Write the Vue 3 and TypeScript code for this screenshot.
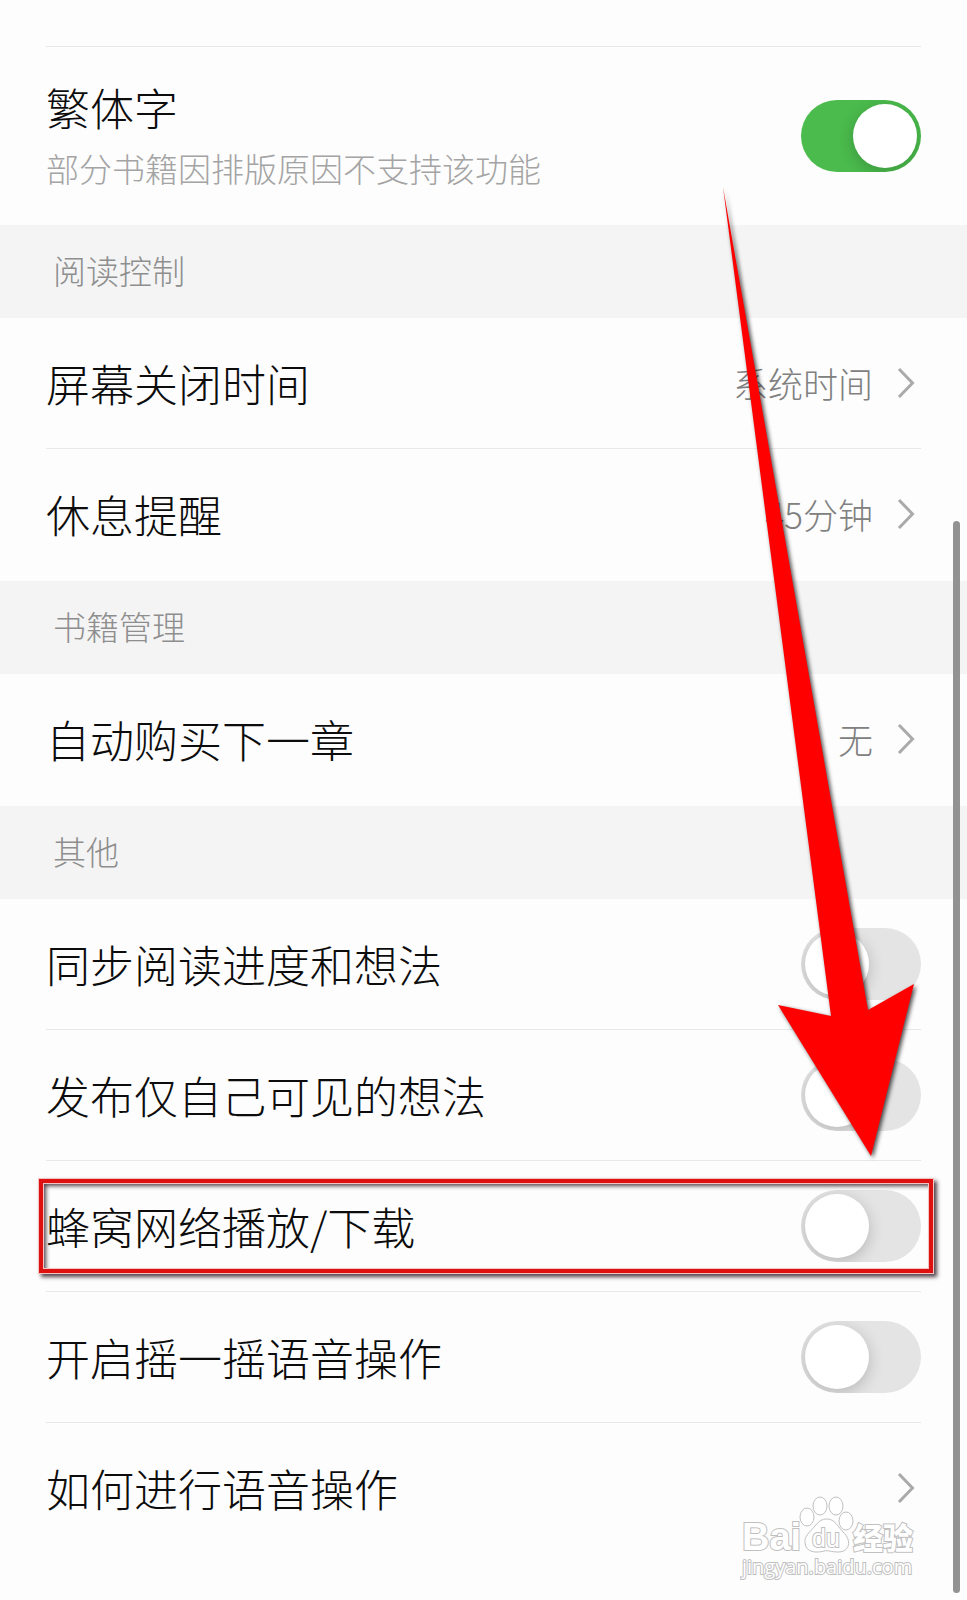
<script setup lang="ts">
import { ref } from 'vue'

interface Row {
  id: string
  label: string
  hint?: string
  kind: 'toggle' | 'link'
  value?: string
  on?: boolean
  marked?: boolean
}

interface Section {
  title: string
  rows: Row[]
}

const sections = ref<Section[]>([
  {
    title: '',
    rows: [
      {
        id: 'traditional',
        label: '繁体字',
        hint: '部分书籍因排版原因不支持该功能',
        kind: 'toggle',
        on: true,
      },
    ],
  },
  {
    title: '阅读控制',
    rows: [
      { id: 'screen', label: '屏幕关闭时间', kind: 'link', value: '系统时间' },
      { id: 'rest', label: '休息提醒', kind: 'link', value: '45分钟' },
    ],
  },
  {
    title: '书籍管理',
    rows: [{ id: 'buy', label: '自动购买下一章', kind: 'link', value: '无' }],
  },
  {
    title: '其他',
    rows: [
      { id: 'sync', label: '同步阅读进度和想法', kind: 'toggle', on: false },
      { id: 'private', label: '发布仅自己可见的想法', kind: 'toggle', on: false },
      { id: 'cellular', label: '蜂窝网络播放/下载', kind: 'toggle', on: false, marked: true },
      { id: 'shake', label: '开启摇一摇语音操作', kind: 'toggle', on: false },
      { id: 'voice', label: '如何进行语音操作', kind: 'link' },
    ],
  },
])
</script>

<template>
  <main class="settings">
    <section v-for="section in sections" :key="section.title" class="group">
      <h2 v-if="section.title" class="group-title">{{ section.title }}</h2>
      <ul class="rows">
        <li v-for="row in section.rows" :key="row.id" class="item">
          <label v-if="row.kind === 'toggle'" class="row" :class="{ tall: row.hint }" :for="row.id">
            <span class="texts">
              <span class="name">{{ row.label }}</span>
              <span v-if="row.hint" class="hint">{{ row.hint }}</span>
            </span>
            <input :id="row.id" v-model="row.on" class="switch" type="checkbox" role="switch" />
          </label>
          <button v-else class="row" type="button">
            <span class="name">{{ row.label }}</span>
            <span class="end">
              <span class="value">{{ row.value }}</span>
              <svg class="chevron" viewBox="0 0 18 32" aria-hidden="true">
                <path d="M2 2 L15.500 16 L2 30" />
              </svg>
            </span>
          </button>
          <span v-if="row.marked" class="mark"></span>
        </li>
      </ul>
    </section>

    <svg class="arrow" viewBox="0 0 260 1200" aria-hidden="true">
      <path d="M16 187 L161 1010 L207 984 L164 1156 L71 1005 L124 1016 Z" />
    </svg>

    <svg class="watermark" viewBox="0 0 180 90" role="img" aria-label="Baidu 经验">
      <text class="brand" x="2" y="57">Bai</text>
      <g class="paw">
        <ellipse cx="67" cy="24" rx="7" ry="9" />
        <ellipse cx="80" cy="13" rx="7" ry="9" />
        <ellipse cx="96" cy="13" rx="7" ry="9" />
        <ellipse cx="106" cy="28" rx="7" ry="9" />
        <path d="M87 26 C95 26 98 34 103 39 C112 47 110 59 98 59 C91 59 89 57 84 58 C77 60 66 60 65 50 C64 43 70 39 75 33 C79 28 82 26 87 26 Z" />
      </g>
      <text class="du" x="72" y="54">du</text>
      <text class="cn" x="113" y="56">经验</text>
      <text class="url" x="2" y="81">jingyan.baidu.com</text>
    </svg>

    <div class="scrollbar"></div>
  </main>
</template>

<style>
body {
  margin: 0;
  background: #fdfdfd;
}
</style>

<style scoped>
.settings {
  position: relative;
  min-height: 100vh;
  box-sizing: border-box;
  padding: 46px 0 40px;
  overflow: hidden;
  background: #fdfdfd;
  color: #0c0c0c;
  font-family: "Noto Sans CJK SC", sans-serif;
  font-weight: 300;
}

.group-title {
  display: flex;
  align-items: center;
  box-sizing: border-box;
  height: 93px;
  margin: 0;
  padding: 0 53px 3px;
  background: #f4f4f4;
  color: #8e8e8e;
  font-size: 33px;
  font-weight: 300;
  line-height: 44px;
}

.rows {
  margin: 0;
  padding: 0 46px;
  list-style: none;
}

.group + .group .rows {
  padding-bottom: 2px;
}

.item {
  position: relative;
}

.item + .item,
.group:first-child .item {
  border-top: 1px solid #e8e8e8;
}

.row {
  display: flex;
  align-items: center;
  justify-content: space-between;
  box-sizing: border-box;
  width: 100%;
  height: 130px;
  padding: 0;
  border: 0;
  background: none;
  color: inherit;
  font: inherit;
  text-align: left;
}

.tall {
  height: 178px;
}

.texts {
  display: flex;
  flex-direction: column;
  gap: 9px;
}

.tall .texts {
  padding-bottom: 6px;
}

.name {
  font-size: 44px;
  line-height: 60px;
}

.hint {
  color: #a4a4a4;
  font-size: 33px;
  line-height: 44px;
}

.end {
  display: flex;
  align-items: center;
  gap: 24px;
  padding-right: 6px;
}

.value {
  color: #808080;
  font-size: 35px;
  line-height: 48px;
}

.chevron {
  width: 18px;
  height: 32px;
  fill: none;
  stroke: #aaa;
  stroke-width: 3;
}

.switch {
  flex: none;
  appearance: none;
  width: 120px;
  height: 72px;
  margin: 0;
  padding: 4px;
  border-radius: 36px;
  background: #e4e4e4;
  overflow: hidden;
}

.switch::before {
  content: "";
  display: block;
  width: 64px;
  height: 64px;
  border-radius: 50%;
  background: #fff;
  box-shadow: 0 4px 16px rgba(0, 0, 0, 0.2);
}

.switch:checked {
  background: #4abb4c;
}

.switch:checked::before {
  margin-left: auto;
}

.mark {
  position: absolute;
  inset: 18px -12px 18px -7px;
  border: 4px solid #de1010;
  outline: 1px solid #f3c4c4;
  box-shadow:
    3px 3px 4px 1px rgba(40, 20, 30, 0.8),
    inset 0 0 0 1px #f3c4c4,
    inset 3px 3px 4px rgba(40, 20, 30, 0.8);
  pointer-events: none;
}

.arrow {
  position: absolute;
  top: 0;
  right: 0;
  width: 260px;
  height: 1200px;
  fill: #fe0000;
  filter: drop-shadow(2px 2px 2px rgba(0, 0, 0, 0.7));
  pointer-events: none;
}

.watermark {
  position: absolute;
  right: 47px;
  bottom: 17px;
  width: 180px;
  height: 90px;
  fill: #fff;
  stroke: #c0c0c0;
  stroke-width: 1;
  pointer-events: none;
}

.watermark text {
  paint-order: stroke;
  stroke-width: 2;
}

.brand {
  font: 700 38px "Liberation Sans", sans-serif;
}

.du {
  font: 400 25px "Liberation Sans", sans-serif;
}

.cn {
  font: 900 30px "Noto Sans CJK SC", sans-serif;
}

.url {
  font: 400 20px "Open Sans", sans-serif;
}

.scrollbar {
  position: absolute;
  top: 521px;
  right: 7px;
  bottom: 7px;
  width: 7px;
  border-radius: 4px;
  background: #929292;
}
</style>
